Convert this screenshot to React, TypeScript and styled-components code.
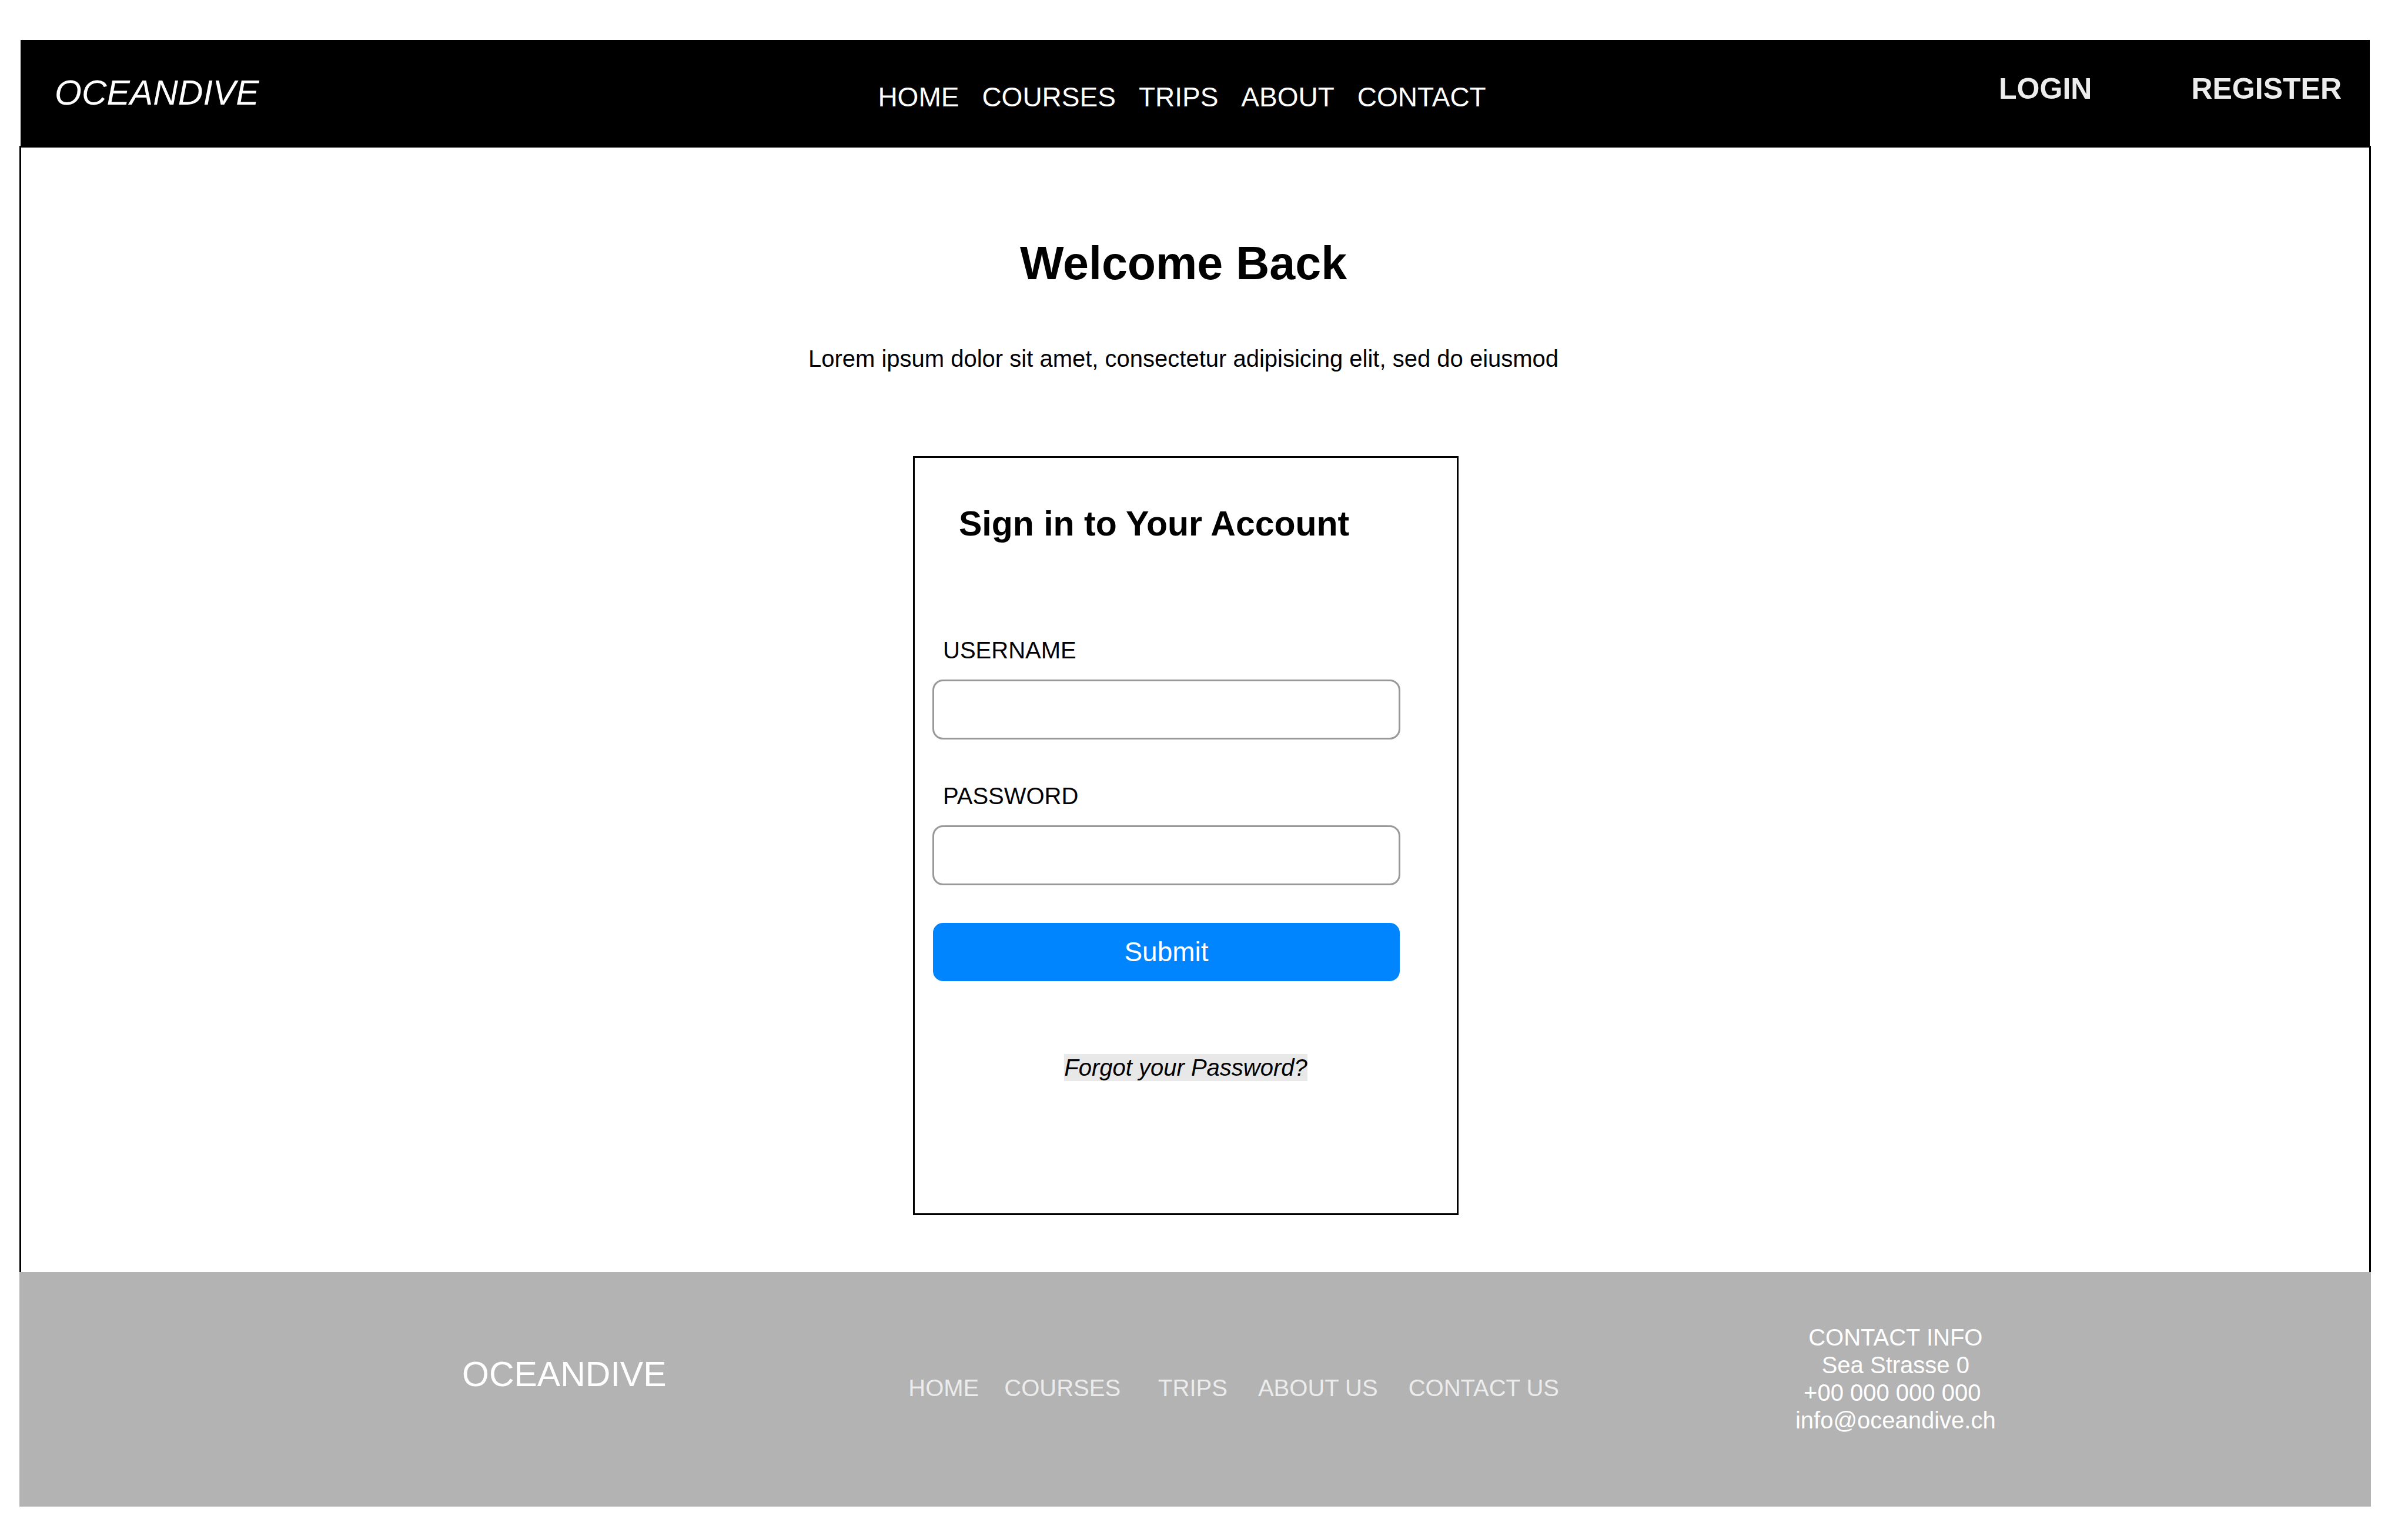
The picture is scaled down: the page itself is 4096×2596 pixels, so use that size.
import React from 'react';
import styled, { createGlobalStyle } from 'styled-components';

const color = {
  ink: '#000000',
  paper: '#ffffff',
  soft: '#ececec',
  footer: '#b3b3b3',
  outline: '#999999',
  accent: '#0085ff',
  highlight: '#e8e8e8',
};

const GlobalStyle = createGlobalStyle`
  *, *::before, *::after {
    box-sizing: border-box;
  }
  body {
    margin: 0;
    background: ${color.paper};
    color: ${color.ink};
    font-family: "Liberation Sans", Arial, Helvetica, sans-serif;
    font-size: 40px;
    line-height: 46px;
  }
  h1, h2, p, ul, address {
    margin: 0;
    padding: 0;
  }
  a {
    color: inherit;
    text-decoration: none;
  }
`;

const Page = styled.div`
  padding: 68px 63px 33px 33px;
`;

const Header = styled.header`
  display: grid;
  grid-template-columns: 36fr 49fr 15fr;
  align-items: start;
  margin: 0 2px;
  padding: 54px 48px 56px 58px;
  background: ${color.ink};
  color: ${color.paper};
`;

const Brand = styled.a<{ $italic?: boolean; $drop: number }>`
  padding-top: ${(p) => p.$drop}px;
  font-size: 59px;
  line-height: 68px;
  font-style: ${(p) => (p.$italic ? 'italic' : 'normal')};
`;

const NavList = styled.ul`
  display: flex;
  list-style: none;
  white-space: nowrap;
`;

const HeaderNav = styled.nav`
  padding-top: 17px;
  font-size: 46px;
  line-height: 53px;

  ${NavList} {
    gap: 39px;
  }
`;

const AuthLinks = styled.div`
  display: flex;
  justify-content: flex-end;
  gap: 169px;
  color: ${color.soft};
  font-size: 50px;
  font-weight: 700;
  line-height: 58px;
`;

const Main = styled.main`
  display: flex;
  flex-direction: column;
  align-items: center;
  padding: 152px 32px 97px 0;
  border: 3px solid ${color.ink};
  border-bottom: 0;
`;

const Intro = styled.div`
  display: flex;
  flex-direction: column;
  gap: 94px;
  padding-right: 8px;
  text-align: center;
`;

const Title = styled.h1`
  font-size: 79px;
  line-height: 90px;
`;

const Card = styled.section`
  width: 928px;
  max-width: 100%;
  margin-top: 143px;
  padding: 78px 0 225px;
  border: 3px solid ${color.ink};
`;

const CardTitle = styled.h2`
  padding-left: 75px;
  font-size: 59px;
  line-height: 68px;
`;

const Form = styled.form`
  display: flex;
  flex-direction: column;
  padding: 158px 96px 124px 30px;
`;

const Field = styled.div`
  display: flex;
  flex-direction: column;
  gap: 27px;

  & + & {
    margin-top: 73px;
  }
`;

const Label = styled.label`
  padding-left: 18px;
`;

const Input = styled.input`
  width: 100%;
  height: 102px;
  padding: 0 24px;
  border: 3px solid ${color.outline};
  border-radius: 18px;
  background: ${color.paper};
  color: inherit;
  font: inherit;
`;

const SubmitButton = styled.button`
  height: 99px;
  margin: 64px 1px 0;
  padding: 0;
  border: 0;
  border-radius: 17px;
  background: ${color.accent};
  color: ${color.paper};
  font-family: inherit;
  font-size: 46px;
  line-height: 53px;
`;

const Forgot = styled.p`
  display: flex;
  justify-content: center;
  font-style: italic;

  a {
    background: ${color.highlight};
  }
`;

const Footer = styled.footer`
  display: grid;
  grid-template-columns: 76fr 151fr 98fr;
  align-items: start;
  padding: 88px 0 123px 753px;
  background: ${color.footer};
  color: ${color.paper};
`;

const FooterNav = styled.nav`
  padding-top: 86px;
  color: ${color.soft};
`;

const FooterItem = styled.li<{ $after: number }>`
  margin-right: ${(p) => p.$after}px;
`;

const Contact = styled.address`
  display: flex;
  flex-direction: column;
  justify-self: start;
  font-style: normal;
  line-height: 47px;
  text-align: center;
`;

const headerLinks = ['HOME', 'COURSES', 'TRIPS', 'ABOUT', 'CONTACT'];

const footerLinks = [
  { text: 'HOME', after: 43 },
  { text: 'COURSES', after: 64 },
  { text: 'TRIPS', after: 52 },
  { text: 'ABOUT US', after: 52 },
  { text: 'CONTACT US', after: 0 },
];

export default function App() {
  return (
    <>
      <GlobalStyle />
      <Page>
        <Header>
          <Brand href="#" $italic $drop={2}>OCEANDIVE</Brand>
          <HeaderNav>
            <NavList>
              {headerLinks.map((text) => (
                <li key={text}>
                  <a href="#">{text}</a>
                </li>
              ))}
            </NavList>
          </HeaderNav>
          <AuthLinks>
            <a href="#">LOGIN</a>
            <a href="#">REGISTER</a>
          </AuthLinks>
        </Header>

        <Main>
          <Intro>
            <Title>Welcome Back</Title>
            <p>Lorem ipsum dolor sit amet, consectetur adipisicing elit, sed do eiusmod</p>
          </Intro>

          <Card>
            <CardTitle>Sign in to Your Account</CardTitle>
            <Form onSubmit={(e) => e.preventDefault()}>
              <Field>
                <Label htmlFor="username">USERNAME</Label>
                <Input id="username" type="text" autoComplete="username" />
              </Field>
              <Field>
                <Label htmlFor="password">PASSWORD</Label>
                <Input id="password" type="password" autoComplete="current-password" />
              </Field>
              <SubmitButton type="submit">Submit</SubmitButton>
            </Form>
            <Forgot>
              <a href="#">Forgot your Password?</a>
            </Forgot>
          </Card>
        </Main>

        <Footer>
          <Brand href="#" $drop={52}>OCEANDIVE</Brand>
          <FooterNav>
            <NavList>
              {footerLinks.map(({ text, after }) => (
                <FooterItem key={text} $after={after}>
                  <a href="#">{text}</a>
                </FooterItem>
              ))}
            </NavList>
          </FooterNav>
          <Contact>
            <span>CONTACT INFO</span>
            <span>Sea Strasse 0</span>
            <span>+00 000 000 000&nbsp;</span>
            <a href="#">info@oceandive.ch</a>
          </Contact>
        </Footer>
      </Page>
    </>
  );
}
